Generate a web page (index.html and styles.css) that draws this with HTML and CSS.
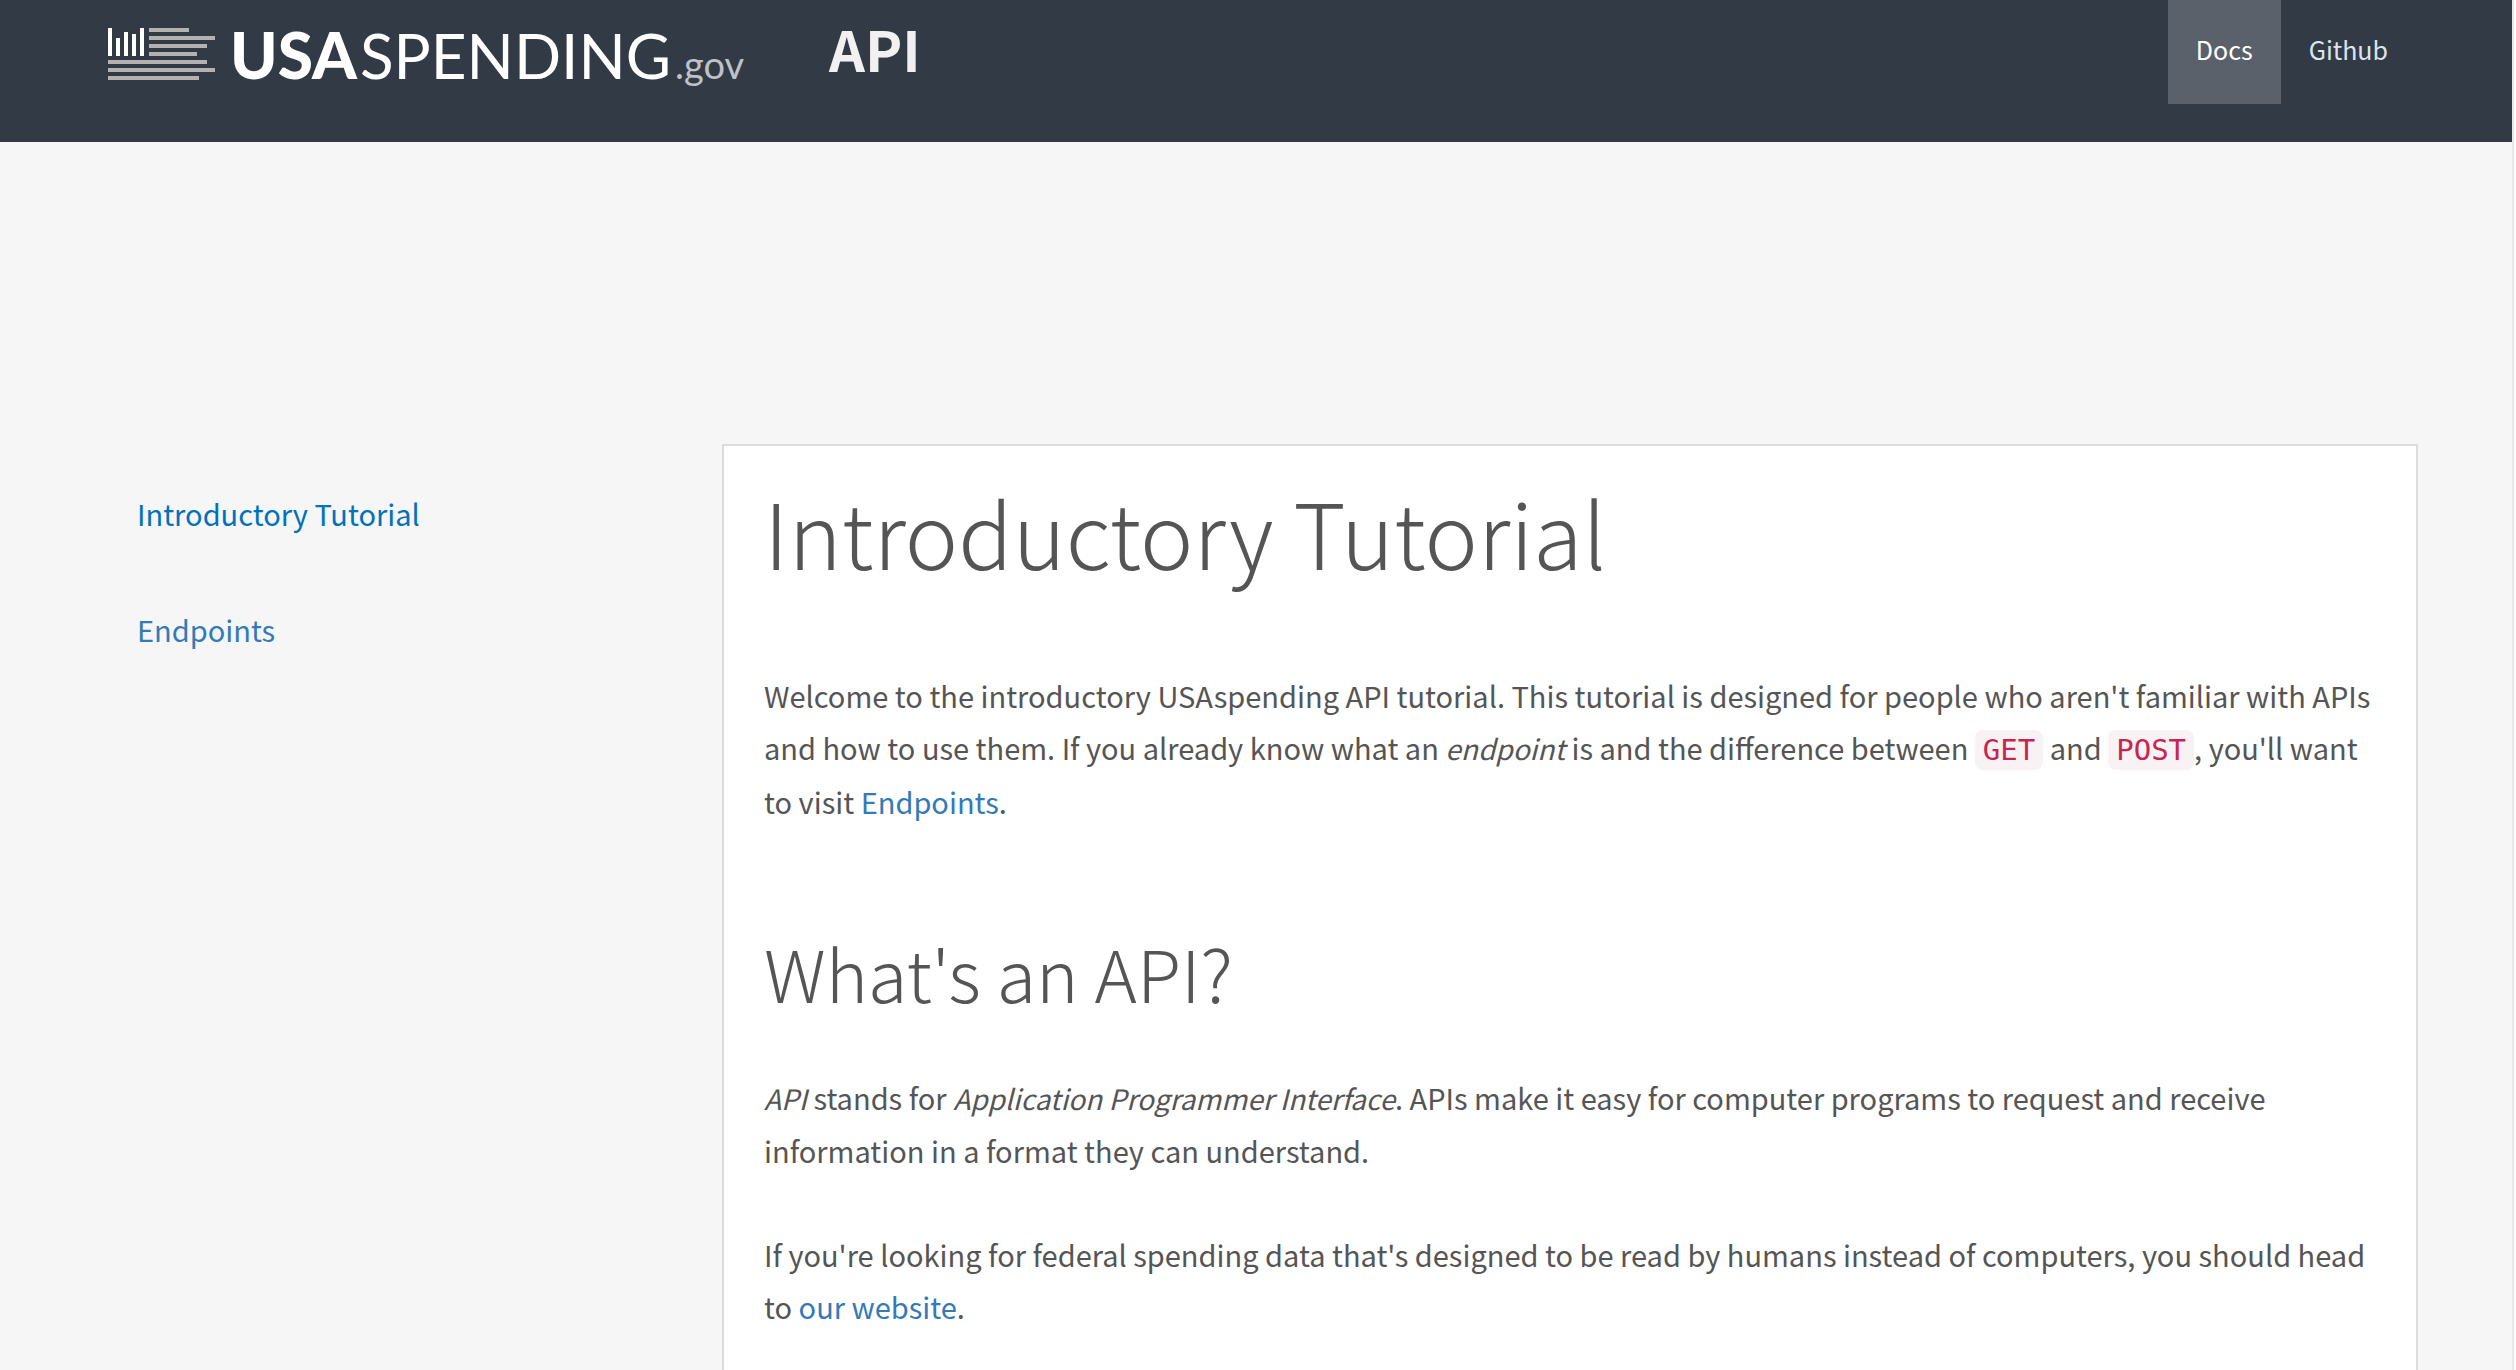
FILE: index.html
```html
<!DOCTYPE html>
<html lang="en">
<head>
<meta charset="utf-8">
<title>USAspending API</title>
<link rel="stylesheet" href="styles.css">
</head>
<body>
<header class="site-header">
  <a class="logo" href="#" aria-label="USAspending.gov home">
    <svg class="logo-mark" viewBox="0 0 108 52" aria-hidden="true">
      <path fill="#fff" d="M0 0h4v28H0zM8 10h4v18H8zM16 4h4v24h-4zM24 6h4v22h-4zM32 0h4v28h-4z"/>
      <path fill="#b5b1af" d="M41 0h40v4H41zM41 8h66v4H41zM41 16h58v4H41zM41 24h48v4H41zM0 32h99v4H0zM0 40h107v4H0zM0 48h91v4H0z"/>
    </svg>
    <span class="logo-text"><span class="logo-bold">USA</span><span class="logo-light">SPENDING</span><span class="logo-gov">.gov</span></span>
  </a>
  <span class="site-title">API</span>
  <nav class="site-nav">
    <a class="nav-link active" href="#">Docs</a>
    <a class="nav-link" href="#">Github</a>
  </nav>
</header>
<div class="layout">
  <nav class="sidebar">
    <a class="side-link current" href="#">Introductory Tutorial</a>
    <a class="side-link" href="#">Endpoints</a>
  </nav>
  <main class="content">
    <h1>Introductory Tutorial</h1>
    <p>Welcome to the introductory USAspending API tutorial. This tutorial is designed for people who aren't familiar with APIs and how to use them. If you already know what an <em>endpoint</em> is and the difference between <code>GET</code> and <code>POST</code>, you'll want to visit <a href="#">Endpoints</a>.</p>
    <h2>What's an API?</h2>
    <p><em>API</em> stands for <em>Application Programmer Interface</em>. APIs make it easy for computer programs to request and receive information in a format they can understand.</p>
    <p>If you're looking for federal spending data that's designed to be read by humans instead of computers, you should head to <a href="#">our website</a>.</p>
  </main>
</div>
</body>
</html>
```
FILE: styles.css
```css
* { box-sizing: border-box; }
html { background: #fafafa; padding-right: 2px; }
body { margin: 0; min-height: 100vh; background: #f6f6f6; color: #555; font: 29px/52px "Noto Sans CJK SC", sans-serif; border-right: 2px solid #e8e8e8; }
a { color: #337ab7; text-decoration: none; }
.site-header { display: flex; align-items: flex-start; height: 142px; padding: 0 96px 0 108px; background: #323a45; color: #f1f1f1; }
.logo { display: flex; width: 721px; padding-top: 28px; color: #fff; }
.logo-mark { width: 108px; height: 52px; }
.logo-text { margin-left: 14px; font: 62px/54px Lato, sans-serif; white-space: nowrap; }
.logo-bold { font-size: 64px; font-weight: 900; }
.logo-light { margin: 0 4px 0 3px; }
.logo-gov { font-size: 38px; font-weight: 400; color: #bfc2c6; }
.site-title { font-size: 56px; font-weight: 700; line-height: 96px; }
.site-nav { display: flex; margin-left: auto; }
.nav-link { padding: 0 28px; height: 104px; line-height: 98px; font-size: 25px; color: #dce4ef; }
.nav-link.active { background: #5b616b; color: #fff; }
.layout { display: grid; grid-template-columns: 585px 1fr; padding: 302px 94px 0 137px; }
.sidebar { display: flex; flex-direction: column; gap: 64px; padding-top: 43px; }
.side-link.current { color: #0071bc; }
.content { background: #fff; border: 2px solid #dcdcdc; padding: 40px; }
h1 { font-size: 90px; line-height: 90px; font-weight: 300; margin: 0 0 93px; }
h2 { font-size: 72px; line-height: 80px; font-weight: 300; margin: 105px 0 59px; }
p { margin: 0 0 52px; }
em { font-size: 28px; }
code { font: 29px/50px "DejaVu Sans Mono", monospace; color: #c7254e; background: #f9f2f4; padding: 3px 8px; border-radius: 8px; }
```
